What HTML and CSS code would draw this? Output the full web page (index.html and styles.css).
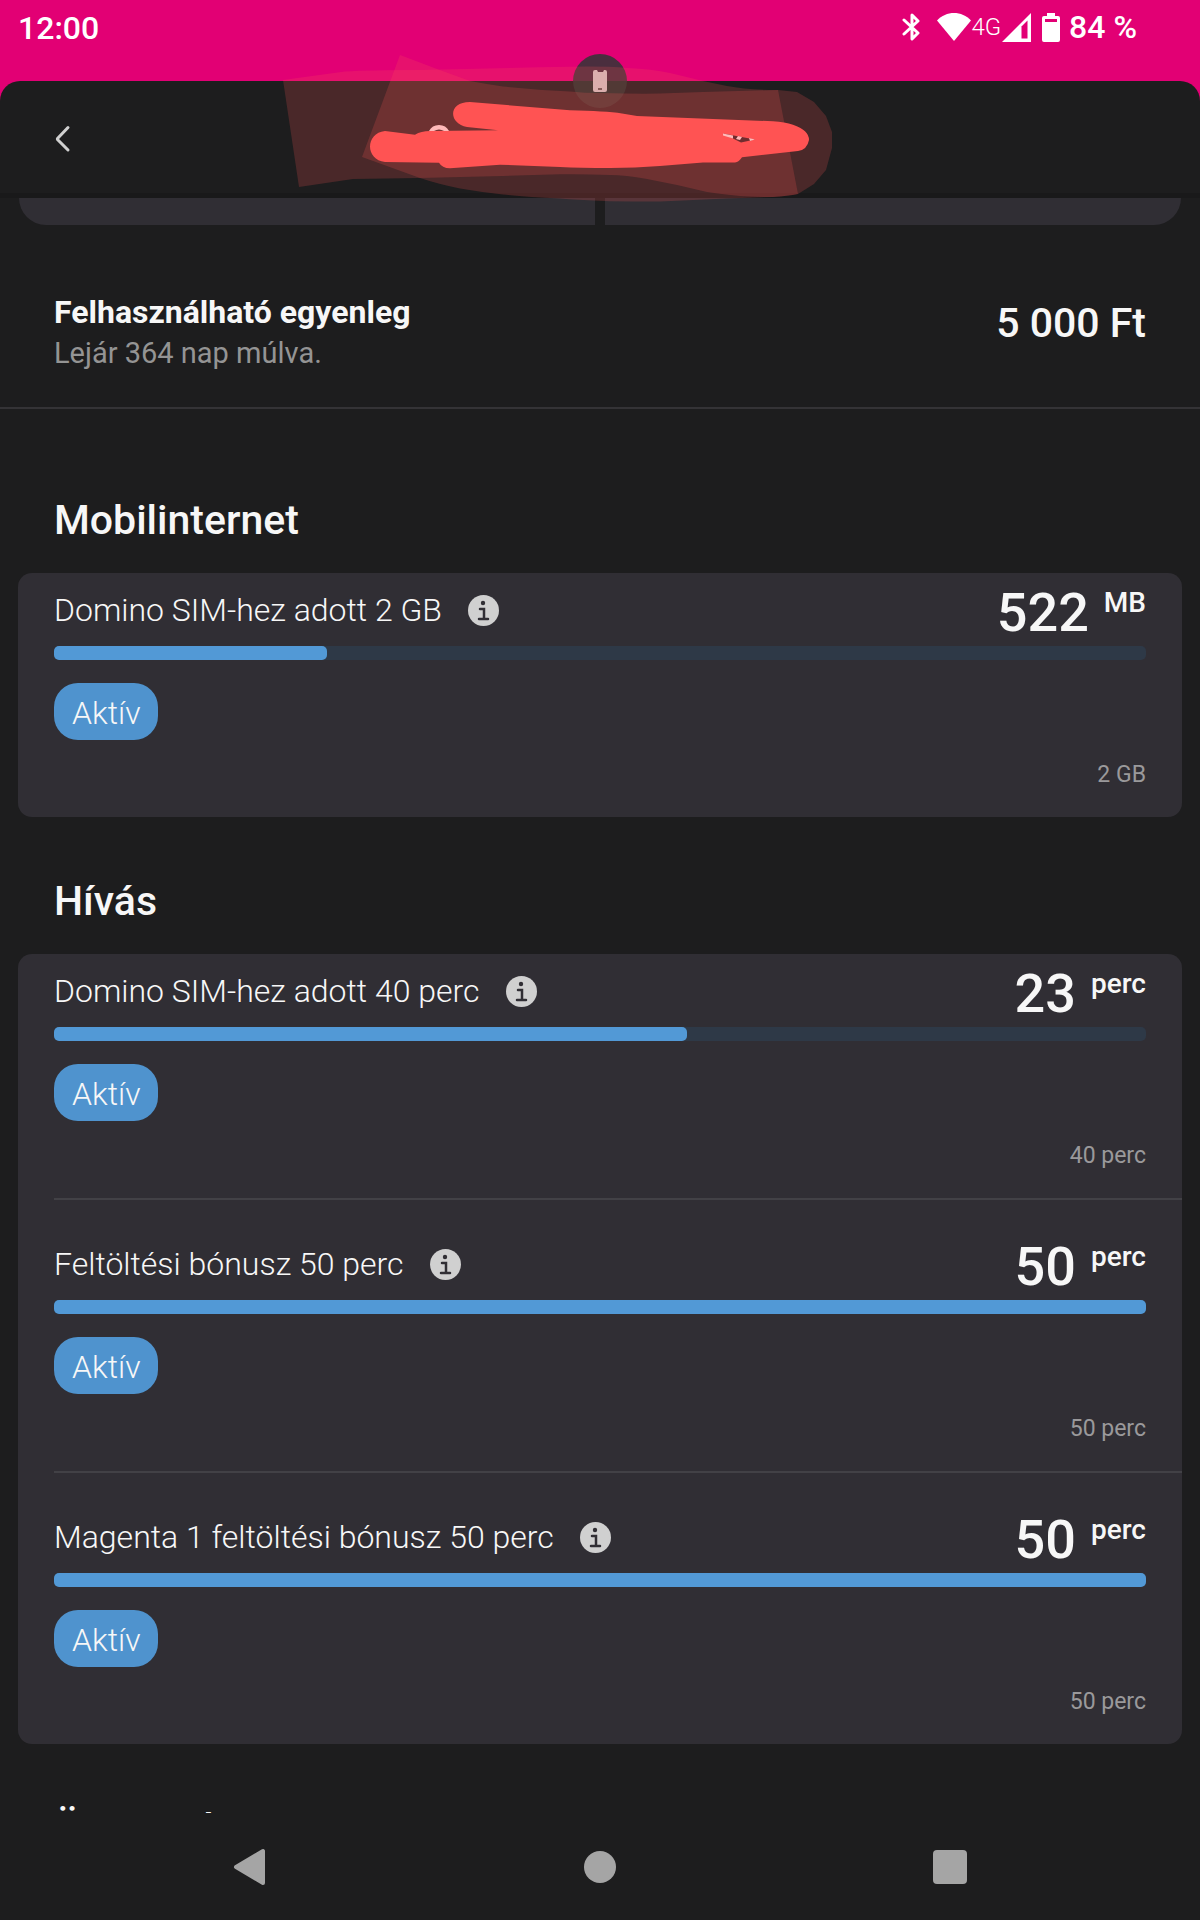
FILE: index.html
```html
<!DOCTYPE html>
<html lang="hu">

<head>
    <meta charset="UTF-8">
    <meta name="viewport" content="width=device-width, initial-scale=1.0">
    <title>Egyenleg</title>
    <link rel="stylesheet" href="styles.css">
</head>

<body>
    <div class="status-bar">
        <span>12:00</span>
        <div class="status-icons">
            <svg class="bluetooth" width="18" height="28" viewBox="0 0 18 28" fill="none" stroke="#fff" stroke-width="3" stroke-linejoin="round" stroke-linecap="round"><path d="M2 7l14 13-6 6V2l6 6L2 21"/></svg>
            <svg width="34" height="28" viewBox="0 0 34 28" fill="#fff"><path d="M0 7.500C9-2.500 25-2.500 34 7.500L17 28z"/></svg>
            <span class="network">4G</span>
            <svg class="signal" width="29" height="29" viewBox="0 0 29 29"><path d="M29 0v29H0z" fill="#fff"/><path d="M19.500 13.500l6-6V25.500h-6z" fill="#e20074"/></svg>
            <svg class="battery" width="18" height="29" viewBox="0 0 18 29"><path d="M5 0h8v3h3q2 0 2 2v22q0 2-2 2H2q-2 0-2-2V5q0-2 2-2h3z" fill="#fff"/><path d="M3 6h12v3H3z" fill="#e20074"/></svg>
            <span>84 %</span>
        </div>
    </div>

    <header class="app-header">
        <button class="back" aria-label="Vissza">
            <svg width="16" height="28" viewBox="0 0 16 28" fill="none" stroke="#d0d0d0" stroke-width="3" stroke-linecap="round" stroke-linejoin="round"><path d="M13 2.500L2.500 13.500a1 1 0 0 0 0 1L13 25"/></svg>
        </button>
        <!-- hidden account name -->
        <svg class="scribble" width="560" height="160" viewBox="280 50 560 160" aria-hidden="true">
            <circle cx="600" cy="81" r="27" fill="#283832" fill-opacity=".82"/>
            <path d="M595 70h2l1 2h5l1-2h1q2 0 2 2v18q0 2-2 2h-10q-2 0-2-2V72q0-2 2-2z" fill="#d3c5c3"/>
            <path d="M598 89h4" stroke="#463a38" stroke-width="1.500"/>
            <g fill="#ff5353" fill-opacity=".2">
                <path d="M283 80L345 71.500Q370 70 420 70Q500 68 570 66.700Q605 66 627 68Q652 69 670 73L703 81L727 86Q748 90 778 90L798 194Q788 196 773 197Q752 197 740 196Q720 194 707 192L677 185L647 179Q625 175 610 175Q585 174 560 174.300L503 176L420 178L353 179L299 187z"/>
                <path d="M400 55L437 69L470 81Q486 84 503 86.500Q535 90 570 91.500Q585 93 600 93Q640 94 660 93.500L703 92L778 90L797 92L814 102L826 116L832 132V148L826 170L814 184L798 194Q788 196 773 197L727 198.500L660 201.500Q600 202 560 198.500Q525 197 503 194.500Q480 192 460 188.500Q438 184 420 178L362 157z"/>
            </g>
            <path d="M385 131L415 134.700Q421 131 430 131L498 130.300L467 127C448 123 448 102 470 102L570 110.300Q605 111 622 113.500L637 116L773 121.300Q785 122 793 124.700Q809 130 809 140Q807 150 798 151L742 157.300Q739 162 735 162.500H703L660 166Q635 168 610 168Q580 168 560 167L500 164.700L450 168.300Q442 168 439 162.700L385 162C365 160 365 133 385 131z" fill="#ff5353"/>
            <path d="M429 131q3-6 10-6t10 6h-5q-5-3-10 0z" fill="#ffb9b9"/>
            <path d="M723 133.500L755 139.500L741 142.500z" fill="#6f2d2f"/>
            <path d="M723 133.500l10 2v3l-10-3zM738 136l4 1-2 3-4-1zM749 138l6 1.500-5 1.500z" fill="#ffb9b9"/>
        </svg>
    </header>

    <main>
        <div class="tabs">
            <div class="tab tab-left"></div>
            <div class="tab tab-right"></div>
        </div>

        <section class="balance">
            <div>
                <h1>Felhasználható egyenleg</h1>
                <p>Lejár 364 nap múlva.</p>
            </div>
            <strong class="amount">5 000 Ft</strong>
        </section>

        <h2 class="first-title">Mobilinternet</h2>
        <ul class="card">
            <li class="quota">
                <div class="quota-head">
                    <div class="quota-name">Domino SIM-hez adott 2 GB
                        <button class="info" aria-label="Információ"><svg width="31" height="31" viewBox="0 0 31 31"><circle cx="15.500" cy="15.500" r="15.500" fill="#d0d0d0"/><circle cx="15" cy="8" r="2.200" fill="#302e34"/><path d="M12 14h4v10M11 24h9" fill="none" stroke="#302e34" stroke-width="2.500" stroke-linecap="round"/></svg></button>
                    </div>
                    <div class="value">522 <span class="unit">MB</span></div>
                </div>
                <div class="bar"><div class="fill" style="width: 25%"></div></div>
                <span class="badge">Aktív</span>
                <div class="total">2 GB</div>
            </li>
        </ul>

        <h2>Hívás</h2>
        <ul class="card">
            <li class="quota">
                <div class="quota-head">
                    <div class="quota-name">Domino SIM-hez adott 40 perc
                        <button class="info" aria-label="Információ"><svg width="31" height="31" viewBox="0 0 31 31"><circle cx="15.500" cy="15.500" r="15.500" fill="#d0d0d0"/><circle cx="15" cy="8" r="2.200" fill="#302e34"/><path d="M12 14h4v10M11 24h9" fill="none" stroke="#302e34" stroke-width="2.500" stroke-linecap="round"/></svg></button>
                    </div>
                    <div class="value">23 <span class="unit">perc</span></div>
                </div>
                <div class="bar"><div class="fill" style="width: 58%"></div></div>
                <span class="badge">Aktív</span>
                <div class="total">40 perc</div>
            </li>
            <li class="quota">
                <div class="quota-head">
                    <div class="quota-name">Feltöltési bónusz 50 perc
                        <button class="info" aria-label="Információ"><svg width="31" height="31" viewBox="0 0 31 31"><circle cx="15.500" cy="15.500" r="15.500" fill="#d0d0d0"/><circle cx="15" cy="8" r="2.200" fill="#302e34"/><path d="M12 14h4v10M11 24h9" fill="none" stroke="#302e34" stroke-width="2.500" stroke-linecap="round"/></svg></button>
                    </div>
                    <div class="value">50 <span class="unit">perc</span></div>
                </div>
                <div class="bar"><div class="fill" style="width: 100%"></div></div>
                <span class="badge">Aktív</span>
                <div class="total">50 perc</div>
            </li>
            <li class="quota">
                <div class="quota-head">
                    <div class="quota-name">Magenta 1 feltöltési bónusz 50 perc
                        <button class="info" aria-label="Információ"><svg width="31" height="31" viewBox="0 0 31 31"><circle cx="15.500" cy="15.500" r="15.500" fill="#d0d0d0"/><circle cx="15" cy="8" r="2.200" fill="#302e34"/><path d="M12 14h4v10M11 24h9" fill="none" stroke="#302e34" stroke-width="2.500" stroke-linecap="round"/></svg></button>
                    </div>
                    <div class="value">50 <span class="unit">perc</span></div>
                </div>
                <div class="bar"><div class="fill" style="width: 100%"></div></div>
                <span class="badge">Aktív</span>
                <div class="total">50 perc</div>
            </li>
        </ul>

        <h2>Üzenetek</h2>
    </main>

    <nav class="nav-bar">
        <button aria-label="Vissza"><svg width="36" height="38" viewBox="0 0 36 38"><path d="M31 3v32L4 19z" fill="#a5a5a5" stroke="#a5a5a5" stroke-width="4" stroke-linejoin="round"/></svg></button>
        <button aria-label="Kezdőképernyő"><svg width="36" height="38" viewBox="0 0 36 38"><circle cx="18" cy="19" r="16" fill="#a5a5a5"/></svg></button>
        <button aria-label="Áttekintés"><svg width="36" height="38" viewBox="0 0 36 38"><rect x="1" y="2" width="34" height="34" rx="4" fill="#a5a5a5"/></svg></button>
    </nav>
</body>

</html>
```
FILE: styles.css
```css
* {
    box-sizing: border-box;
}

body {
    margin: 0;
    height: 100vh;
    display: flex;
    flex-direction: column;
    overflow: hidden;
    font-family: Roboto, "Liberation Sans", sans-serif;
    font-size: 32px;
    background: #1d1d1e;
    color: #f7f7f7;
}

h1, h2, p, ul {
    margin: 0;
    padding: 0;
}

button {
    display: flex;
    align-items: center;
    justify-content: center;
    padding: 0;
    border: none;
    background: none;
    cursor: pointer;
}

/* status bar */
.status-bar {
    display: flex;
    justify-content: space-between;
    padding: 8px 63px 52px 18px;
    margin-bottom: -20px;
    background: #e20074;
    color: white;
    font-weight: 500;
    line-height: 41px;
}

.status-icons {
    display: flex;
    align-items: center;
    height: 38px;
}

.bluetooth {
    margin-right: 17px;
}

.network {
    font-size: 24px;
    font-weight: 300;
}

.signal {
    margin-left: 1px;
}

.battery {
    margin: 0 9px 0 11px;
}

/* header */
.app-header {
    position: relative;
    z-index: 1;
    flex-shrink: 0;
    height: 117px;
    padding: 32px 41px;
    border-radius: 20px 20px 0 0;
    border-bottom: 5px solid #19191a;
    background: #1d1d1e;
}

.back {
    width: 44px;
    height: 52px;
}

.scribble {
    position: absolute;
    top: -31px;
    left: 50%;
    margin-left: -320px;
}

main {
    flex: 1;
    min-height: 0;
    overflow: hidden;
}

.tabs {
    display: flex;
    gap: 10px;
    padding: 0 19px;
}

.tab {
    flex: 1;
    height: 27px;
    background: #302e34;
}

.tab-left {
    border-bottom-left-radius: 27px;
}

.tab-right {
    border-bottom-right-radius: 27px;
}

.balance {
    display: flex;
    justify-content: space-between;
    padding: 67px 54px 33px;
    border-bottom: 2px solid #343336;
    line-height: 40px;
}

h1 {
    font-size: 32px;
    font-weight: 700;
}

.balance p {
    font-size: 29px;
    line-height: 42px;
    color: #949494;
}

.amount {
    font-size: 41px;
    font-weight: 500;
    line-height: 62px;
}

h2 {
    margin: 60px 54px 29px;
    font-size: 41px;
    font-weight: 500;
    line-height: 48px;
}

.first-title {
    margin-top: 87px;
}

/* cards */
.card {
    margin: 0 18px;
    padding-left: 36px;
    border-radius: 14px;
    background: #302e34;
    list-style: none;
}

.quota {
    padding: 9px 36px 26px 0;
}

.quota + .quota {
    padding-top: 36px;
    border-top: 2px solid #424146;
}

.quota-head {
    display: flex;
    justify-content: space-between;
    align-items: flex-start;
}

.quota-name {
    display: flex;
    align-items: center;
    gap: 26px;
    font-weight: 300;
    line-height: 56px;
}

.value {
    display: flex;
    gap: 15px;
    height: 64px;
    font-size: 54px;
    font-weight: 500;
    line-height: 62px;
}

.unit {
    font-size: 28px;
    line-height: 42px;
}

.bar {
    height: 14px;
    border-radius: 5px;
    background: #2e3947;
}

.fill {
    height: 14px;
    border-radius: 5px;
    background: #5299d6;
}

.badge {
    display: block;
    width: fit-content;
    margin: 23px 0 19px;
    padding: 3px 17px 0 18px;
    border-radius: 24px;
    background: #4f93ce;
    font-weight: 300;
    line-height: 54px;
}

.total {
    font-size: 23px;
    line-height: 32px;
    text-align: right;
    color: #9a999b;
}

/* android navigation */
.nav-bar {
    display: grid;
    grid-template-columns: repeat(3, 1fr);
    justify-items: center;
    padding: 35px 75px 34px;
    background: #1d1d1e;
}
```
